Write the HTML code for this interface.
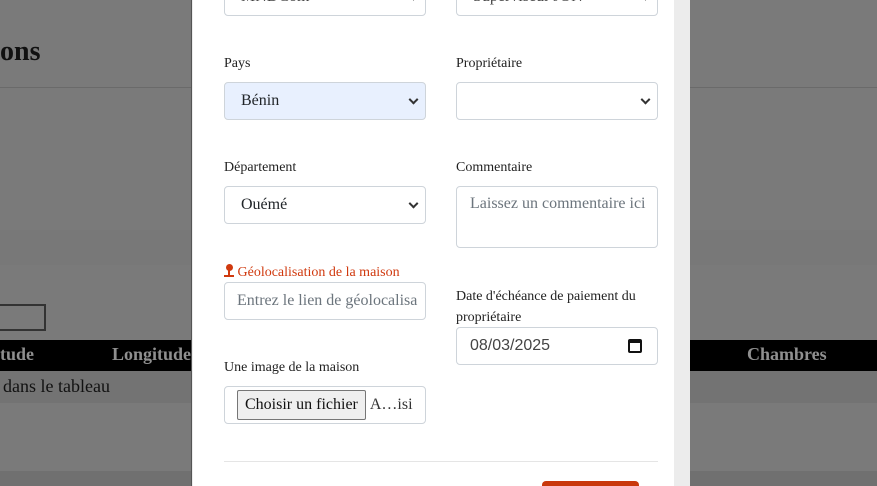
<!DOCTYPE html>
<html><head><meta charset="utf-8"><style>
*{box-sizing:border-box;margin:0;padding:0}
html,body{width:877px;height:486px;overflow:hidden}
body{position:relative;background:#7a7a7a;font-family:"Liberation Serif",serif}
.abs{position:absolute}
.lbl{position:absolute;font-size:14px;color:#222;font-family:"Liberation Serif",serif}
.ctl{position:absolute;border:1px solid #ced4da;border-radius:4px;background:#fff;font-size:16px;color:#212529;padding-left:16px;display:flex;align-items:center;font-family:"Liberation Serif",serif;white-space:nowrap;overflow:hidden}
.chev{position:absolute;right:8px;top:50%;width:7px;height:7px;border-right:2px solid #333;border-bottom:2px solid #333;transform:translateY(-70%) rotate(45deg)}
</style></head><body>
<div class="abs" style="left:0;top:0;width:877px;height:88px;border-bottom:1px solid #6a6a6a"></div>
<div class="abs" style="left:0;top:230px;width:877px;height:35px;background:#787878"></div>
<div class="abs" style="left:0;top:36px;font-size:28px;font-weight:bold;color:#111">ons</div>
<div class="abs" style="left:-5px;top:304px;width:51px;height:27px;border:2px solid #333"></div>
<div class="abs" style="left:0;top:340px;width:877px;height:31px;background:#000"></div>
<div class="abs" style="left:0;top:344px;font-size:18px;font-weight:bold;color:#8f8f8f">tude</div>
<div class="abs" style="left:112px;top:344px;font-size:18px;font-weight:bold;color:#8f8f8f">Longitude</div>
<div class="abs" style="left:747px;top:344px;font-size:18px;font-weight:bold;color:#8f8f8f">Chambres</div>
<div class="abs" style="left:0;top:371px;width:877px;height:32px;background:#737373"></div>
<div class="abs" style="left:3px;top:376px;font-size:18px;color:#111">dans le tableau</div>
<div class="abs" style="left:0;top:471px;width:877px;height:15px;background:#707070"></div>

<div class="abs" style="left:191px;top:0;width:499px;height:486px;background:#ececec;border-left:1px solid #555"></div>
<div class="abs" style="left:193px;top:0;width:481px;height:486px;background:#fff"></div>

<div class="ctl" style="left:224px;top:-22px;width:202px;height:38px;color:#444">MNDCom<span class="chev"></span></div>
<div class="ctl" style="left:456px;top:-22px;width:202px;height:38px;color:#444">Superviseur JON<span class="chev"></span></div>

<div class="lbl" style="left:224px;top:56px">Pays</div>
<div class="lbl" style="left:456px;top:56px">Propriétaire</div>
<div class="ctl" style="left:224px;top:82px;width:202px;height:38px;background:#e8f0fe">Bénin<span class="chev"></span></div>
<div class="ctl" style="left:456px;top:82px;width:202px;height:38px"><span class="chev"></span></div>

<div class="lbl" style="left:224px;top:160px">Département</div>
<div class="lbl" style="left:456px;top:160px">Commentaire</div>
<div class="ctl" style="left:224px;top:186px;width:202px;height:38px">Ouémé<span class="chev"></span></div>
<div class="ctl" style="left:456px;top:186px;width:202px;height:62px;align-items:flex-start;padding:8px 0 0 13px;color:#6c757d">Laissez un commentaire ici</div>

<div class="lbl" style="left:224px;top:263px;color:#d0390e"><span style="display:inline-block;width:10px;height:13px;position:relative;top:1px"><span class="abs" style="left:1.5px;top:0;width:7px;height:7px;border-radius:50%;background:#d0390e"></span><span class="abs" style="left:4px;top:5px;width:2px;height:6px;background:#d0390e"></span><span class="abs" style="left:0;top:11px;width:10px;height:2px;background:#d0390e"></span></span> Géolocalisation de la maison</div>
<div class="ctl" style="left:224px;top:282px;width:202px;height:38px;padding-left:12px;color:#6c757d">Entrez le lien de géolocalisa</div>

<div class="lbl" style="left:456px;top:286px;width:205px;line-height:21px">Date d'échéance de paiement du propriétaire</div>
<div class="ctl" style="left:456px;top:327px;width:202px;height:38px;padding-left:13px;font-family:'Liberation Sans',sans-serif;font-size:16px;color:#444">08/03/2025<span class="abs" style="right:15px;top:11px;width:14px;height:14px;border:2px solid #111;border-top-width:4px;border-radius:2px"></span></div>

<div class="lbl" style="left:224px;top:360px">Une image de la maison</div>
<div class="ctl" style="left:224px;top:386px;width:202px;height:38px;padding-left:12px"><span style="border:1px solid #767676;background:#efefef;border-radius:2px;padding:0 7px;font-size:16px;height:30px;display:flex;align-items:center;color:#111">Choisir un fichier</span><span style="margin-left:4px;color:#333">A…isi</span></div>

<div class="abs" style="left:224px;top:461px;width:434px;height:1px;background:#e5e5e5"></div>
<div class="abs" style="left:542px;top:481px;width:97px;height:5px;background:#c9380c;border-radius:4px 4px 0 0"></div>
</body></html>
